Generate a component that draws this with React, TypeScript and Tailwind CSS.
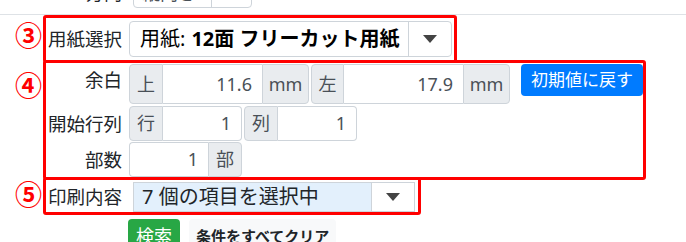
import React from "react";

function Tri() {
  return (
    <svg width="14" height="8" viewBox="0 0 14 8">
      <path d="M0 0H14L7 8Z" fill="#444" />
    </svg>
  );
}

function Addon({ children, className = "" }: { children: React.ReactNode; className?: string }) {
  return (
    <div className={"flex items-center justify-center bg-[#e9ecef] border border-[#ced4da] text-[#495057] text-[18px] " + className}>
      {children}
    </div>
  );
}

function Num({ value, className = "" }: { value: string; className?: string }) {
  return (
    <input
      readOnly
      value={value}
      className={"bg-white border-y border-[#ced4da] text-right pr-[10px] text-[18px] text-[#495057] outline-none " + className}
    />
  );
}

export default function App() {
  return (
    <div className="w-[686px] h-[242px] overflow-hidden bg-white text-[#212529] font-['Noto_Sans','Noto_Sans_CJK_JP',sans-serif]">
      {/* 前の行の下端 */}
      <div className="h-[15px] border-b border-[#dee2e6] overflow-hidden">
        <div className="flex items-end h-[8px]">
          <div className="w-[122px] shrink-0 h-[36px] flex items-end justify-end pb-[3px] text-[18px] leading-[24px]">方向</div>
          <div className="ml-[11px] shrink-0 h-[36px] w-[119px] flex border border-[#ced4da] rounded-[4px]">
            <div className="w-[77px] flex items-end pb-[2px] pl-[8px] text-[18px] leading-[24px] text-[#495057]">縦向き</div>
            <div className="flex-1 border-l border-[#ced4da]" />
          </div>
        </div>
      </div>

      {/* ③ */}
      <div className="flex">
        <div className="w-[43px] pl-[15px] mt-[7px] text-[27px] leading-[28px] font-bold text-[#ff0000]">③</div>
        <div className="w-[414px] h-[48px] border-[3px] border-[#ff0000] rounded-[3px] flex items-center">
          <div className="w-[76px] text-right text-[18.5px] leading-[24px]">用紙選択</div>
          <div className="ml-[7px] w-[323px] h-[36px] flex border border-[#ced4da] rounded-[4px] bg-white">
            <div className="flex-1 flex items-center pl-[10px] text-[20px] text-black whitespace-nowrap">
              用紙: <span className="font-bold ml-[6px]">12面 フリーカット用紙</span>
            </div>
            <div className="w-[43px] border-l border-[#ced4da] flex items-center justify-center">
              <Tri />
            </div>
          </div>
        </div>
      </div>

      {/* ④ */}
      <div className="flex -mt-[3px]">
        <div className="w-[43px] pl-[15px] mt-[12px] text-[27px] leading-[28px] font-bold text-[#ff0000]">④</div>
        <div className="w-[603px] h-[120px] border-[3px] border-[#ff0000] rounded-[3px] flex flex-col pt-[1px]">
          <div className="flex h-[40px]">
            <div className="w-[76px] h-[32px] flex items-center justify-end text-[18.5px]">余白</div>
            <div className="ml-[7px] flex">
              <Addon className="w-[34px] rounded-l-[4px]">上</Addon>
              <Num value="11.6" className="w-[99px]" />
              <Addon className="w-[47px] rounded-r-[4px]">mm</Addon>
            </div>
            <div className="ml-[2px] flex">
              <Addon className="w-[33px] rounded-l-[4px]">左</Addon>
              <Num value="17.9" className="w-[119px]" />
              <Addon className="w-[47px] rounded-r-[4px]">mm</Addon>
            </div>
            <button className="ml-[11px] w-[122px] h-[32px] rounded-[4px] bg-[#007bff] text-white text-[17px]">初期値に戻す</button>
          </div>
          <div className="flex h-[35px] mt-[2px]">
            <div className="w-[76px] flex items-center justify-end text-[18.5px] whitespace-nowrap">開始行列</div>
            <div className="ml-[7px] flex">
              <Addon className="w-[34px] rounded-l-[4px]">行</Addon>
              <Num value="1" className="w-[79px] border-r rounded-r-[4px]" />
            </div>
            <div className="ml-[2px] flex">
              <Addon className="w-[34px] rounded-l-[4px]">列</Addon>
              <Num value="1" className="w-[79px] border-r rounded-r-[4px]" />
            </div>
          </div>
          <div className="flex h-[35px] mt-[1px]">
            <div className="w-[76px] flex items-center justify-end text-[18.5px]">部数</div>
            <div className="ml-[7px] flex">
              <Num value="1" className="w-[79px] border-l rounded-l-[4px]" />
              <Addon className="w-[34px] rounded-r-[4px]">部</Addon>
            </div>
          </div>
        </div>
      </div>

      {/* ⑤ */}
      <div className="flex -mt-[3px]">
        <div className="w-[43px] pl-[15px] mt-[4px] text-[27px] leading-[28px] font-bold text-[#ff0000]">⑤</div>
        <div className="w-[378px] h-[38px] border-[3px] border-[#ff0000] rounded-[3px] flex items-start pt-[2px]">
          <div className="w-[76px] h-[30px] flex items-center justify-end text-[18.5px]">印刷内容</div>
          <div className="ml-[11px] w-[282px] h-[30px] flex border border-[#ced4da] bg-[#e3f0fc]">
            <div className="flex-1 flex items-center pl-[8px] text-[20px] whitespace-nowrap">7 個の項目を選択中</div>
            <div className="w-[43px] bg-white border-l border-[#ced4da] flex items-center justify-center">
              <Tri />
            </div>
          </div>
        </div>
      </div>

      {/* ボタン */}
      <div className="flex items-start gap-[9px] ml-[128px] mt-[4px]">
        <button className="h-[34px] px-[8px] rounded-[4px] bg-[#28a745] text-white text-[18px] leading-[24px]">検索</button>
        <button className="h-[34px] px-[7px] rounded-[4px] bg-[#f8f9fa] text-[#212529] font-bold text-[15px]">条件をすべてクリア</button>
      </div>
    </div>
  );
}
